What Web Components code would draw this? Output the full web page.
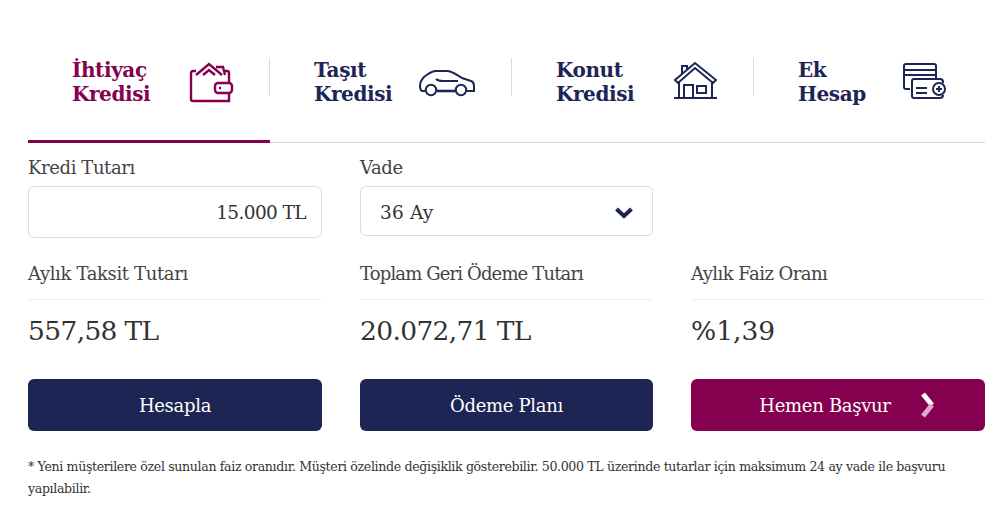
<!DOCTYPE html>
<html lang="tr">
<head>
<meta charset="utf-8">
<title>Kredi Hesaplama</title>
<style>
    html, body { margin: 0; background: #fff; }
    body { font-family: "DejaVu Serif", "Liberation Serif", serif; color: #3f3f3f; }
</style>
</head>
<body>
<credit-calculator>
    <tab-bar slot="tabs">
        <credit-tab active>İhtiyaç<br>Kredisi<svg slot="icon" width="46" height="44" viewBox="0 0 46 44" fill="none" stroke="currentColor" stroke-width="2.4"><path d="M8 11H5Q3 11 3 13V39Q3 41 5 41H41V34M41 22V13Q41 11 39 11H36"/><path d="M8 15L21 4L34 15M15 15L21 10L27 15M28 7H35L37 15"/><rect x="27" y="23" width="17" height="10" rx="3"/><path d="M31 28h2"/></svg></credit-tab>
        <credit-tab>Taşıt<br>Kredisi<svg slot="icon" width="58" height="30" viewBox="0 -1 58 30" fill="none" stroke="currentColor" stroke-width="2"><path d="M7 23H4Q2 22 2 18Q2 13 6 9Q12 4 17 3H30Q35 4 44 10L53 13Q56 14 56 18V23H49"/><path d="M19 23H38" stroke-width="2.6"/><path d="M18 11Q20 13 25 13H40"/><circle cx="13" cy="22" r="5.2"/><circle cx="43" cy="22" r="5.2"/></svg></credit-tab>
        <credit-tab>Konut<br>Kredisi<svg slot="icon" width="46" height="42" viewBox="0 2 46 42" fill="none" stroke="currentColor" stroke-width="2"><path d="M2 39H45" stroke-width="2.2"/><path d="M7 39V22M40 39V22"/><path d="M3 21L23 4L44 21L41 24L23 9L6 24Z"/><path d="M10 15V7H15V10"/><path d="M12 39V26H21V39"/><rect x="25" y="27" width="9" height="7"/></svg></credit-tab>
        <credit-tab>Ek<br>Hesap<svg slot="icon" width="46" height="40" viewBox="0 0 46 40" fill="none" stroke="currentColor" stroke-width="2"><path d="M8 27H4Q2 27 2 25V4Q2 2 4 2H32Q34 2 34 4V16"/><path d="M2 8H34M2 13H34"/><path d="M33 36H12Q10 36 10 34V19Q10 17 12 17H38Q41 17 41 20V21"/><path d="M33 36H38Q41 36 41 33"/><path d="M14 26H25M14 31H25"/><circle cx="37" cy="27" r="6"/><path d="M34 27H40M37 24V30"/></svg></credit-tab>
    </tab-bar>
    <form-field label="Kredi Tutarı" slot="grid"><value-box align="right">15.000 TL</value-box></form-field>
    <form-field label="Vade" slot="grid"><value-box short>36 Ay<svg slot="after" width="20" height="14" viewBox="0 0 20 14" fill="none" stroke="#1c2554" stroke-width="4"><path d="M2.5 3L10 10L17.5 3"/></svg></value-box></form-field>
    <span slot="grid"></span>
    <stat-item label="Aylık Taksit Tutarı" slot="grid" style="--track:-0.36px">557,58 TL</stat-item>
    <stat-item label="Toplam Geri Ödeme Tutarı" slot="grid" style="--track:-0.86px">20.072,71 TL</stat-item>
    <stat-item label="Aylık Faiz Oranı" slot="grid" style="--track:-0.55px;--value-track:0">%1,39</stat-item>
    <action-button slot="grid">Hesapla</action-button>
    <action-button slot="grid">Ödeme Planı</action-button>
    <action-button slot="grid" primary arrow>Hemen Başvur</action-button>
    <span slot="note">* Yeni müşterilere özel sunulan faiz oranıdır. Müşteri özelinde değişiklik gösterebilir. 50.000 TL üzerinde tutarlar için maksimum 24 ay vade ile başvuru yapılabilir.</span>
</credit-calculator>

<script>
class CreditCalculator extends HTMLElement {
    constructor() {
        super();
        this.attachShadow({ mode: 'open' });
        this.shadowRoot.innerHTML = `
            <style>
                :host {
                    display: block;
                    box-sizing: border-box;
                    width: 999px;
                    height: 506px;
                    padding: 48px 14px 0 28px;
                    overflow: hidden;
                }
                .grid {
                    display: grid;
                    grid-template-columns: 294px 293px 294px;
                    column-gap: 38px;
                    margin-top: 13px;
                }
                .note {
                    margin-top: 25px;
                    font-size: 12.6px;
                    line-height: 22px;
                    letter-spacing: -0.36px;
                    color: #333;
                }
            </style>
            <slot name="tabs"></slot>
            <div class="grid"><slot name="grid"></slot></div>
            <div class="note"><slot name="note"></slot></div>
        `;
    }
}

class TabBar extends HTMLElement {
    constructor() {
        super();
        this.attachShadow({ mode: 'open' });
        this.shadowRoot.innerHTML = `
            <style>
                :host {
                    display: flex;
                    border-bottom: 1px solid #e4cfdb;
                }
            </style>
            <slot></slot>
        `;
    }
}

class CreditTab extends HTMLElement {
    constructor() {
        super();
        this.attachShadow({ mode: 'open' });
        this.shadowRoot.innerHTML = `
            <style>
                :host {
                    display: block;
                    flex: none;
                    box-sizing: border-box;
                    width: 242px;
                    height: 95px;
                    padding-top: 10px;
                    color: #1c2554;
                    border-bottom: 3px solid transparent;
                    margin-bottom: -1px;
                }
                :host(:last-child) { width: 231px; }
                :host([active]) {
                    color: #85004f;
                    border-bottom-color: #85004f;
                }
                .inner {
                    display: flex;
                    align-items: center;
                    justify-content: space-between;
                    box-sizing: border-box;
                    height: 38px;
                    padding: 10px 35px 0 44px;
                    border-right: 1px solid #ddd;
                    font-size: 20px;
                    font-weight: bold;
                    line-height: 24px;
                    letter-spacing: -0.4px;
                }
                :host(:last-child) .inner { border-right: 0; padding-right: 37px; }
                ::slotted(svg) { flex: none; }
            </style>
            <div class="inner">
                <div class="label"><slot></slot></div>
                <slot name="icon"></slot>
            </div>
        `;
    }
}

class FormField extends HTMLElement {
    constructor() {
        super();
        this.attachShadow({ mode: 'open' });
        this.shadowRoot.innerHTML = `
            <style>
                :host { display: block; height: 105px; }
                .label {
                    height: 24px;
                    margin-bottom: 6px;
                    font-size: 18px;
                    line-height: 24px;
                    letter-spacing: -0.4px;
                    color: #444;
                }
            </style>
            <div class="label"></div>
            <slot></slot>
        `;
        this.shadowRoot.querySelector('.label').textContent = this.getAttribute('label');
    }
}

class ValueBox extends HTMLElement {
    constructor() {
        super();
        this.attachShadow({ mode: 'open' });
        this.shadowRoot.innerHTML = `
            <style>
                :host {
                    display: flex;
                    align-items: center;
                    justify-content: space-between;
                    box-sizing: border-box;
                    height: 52px;
                    padding: 0 15px 0 19px;
                    border: 1px solid #dcdcdc;
                    border-radius: 6px;
                    font-size: 18.5px;
                    letter-spacing: -0.6px;
                    color: #333;
                }
                :host([short]) { height: 50px; padding: 3px 18px 0 19px; letter-spacing: 0.2px; }
                :host([align="right"]) { justify-content: flex-end; }
            </style>
            <span><slot></slot></span>
            <slot name="after"></slot>
        `;
    }
}

class StatItem extends HTMLElement {
    constructor() {
        super();
        this.attachShadow({ mode: 'open' });
        this.shadowRoot.innerHTML = `
            <style>
                :host { display: block; height: 118px; }
                .label {
                    height: 39px;
                    box-sizing: border-box;
                    padding-top: 1px;
                    border-bottom: 1px solid #efefef;
                    font-size: 18px;
                    line-height: 24px;
                    letter-spacing: var(--track, -0.5px);
                    color: #444;
                }
                .value {
                    margin-top: 14px;
                    font-size: 26.5px;
                    line-height: 34px;
                    letter-spacing: var(--value-track, -0.65px);
                    color: #333;
                }
            </style>
            <div class="label"></div>
            <div class="value"><slot></slot></div>
        `;
        this.shadowRoot.querySelector('.label').textContent = this.getAttribute('label');
    }
}

class ActionButton extends HTMLElement {
    constructor() {
        super();
        this.attachShadow({ mode: 'open' });
        const arrow = this.hasAttribute('arrow')
            ? `<svg width="20" height="26" viewBox="0 0 20 26" fill="none" stroke-width="5"><path d="M4 2L13 13" stroke="#fff"/><path d="M13 13L4 24" stroke="#e3a8cb"/></svg>`
            : '';
        this.shadowRoot.innerHTML = `
            <style>
                :host {
                    display: flex;
                    align-items: center;
                    justify-content: center;
                    gap: 28px;
                    height: 52px;
                    border-radius: 6px;
                    background: #1c2554;
                    color: #fff;
                    font-size: 18px;
                    letter-spacing: -0.3px;
                }
                :host([primary]) { background: #85004f; padding-left: 22px; box-sizing: border-box; }
            </style>
            <span><slot></slot></span>${arrow}
        `;
    }
}

customElements.define('credit-calculator', CreditCalculator);
customElements.define('tab-bar', TabBar);
customElements.define('credit-tab', CreditTab);
customElements.define('form-field', FormField);
customElements.define('value-box', ValueBox);
customElements.define('stat-item', StatItem);
customElements.define('action-button', ActionButton);
</script>
</body>
</html>
